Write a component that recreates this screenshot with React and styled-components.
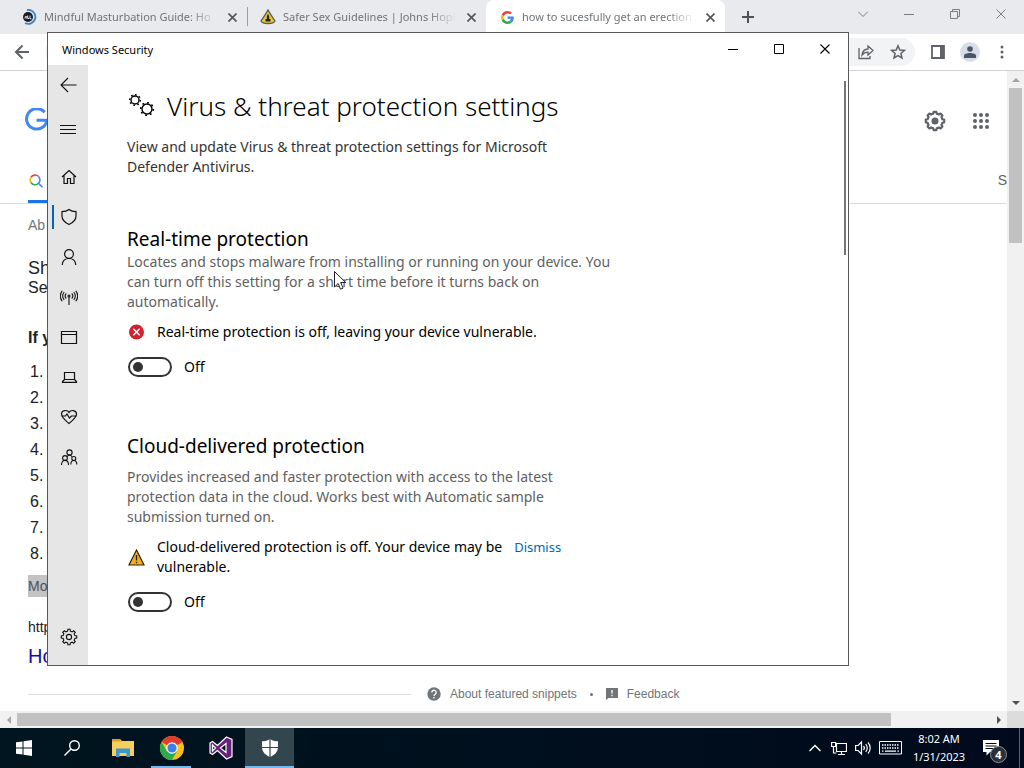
import { useState } from 'react'
import styled, { createGlobalStyle } from 'styled-components'

const GlobalStyle = createGlobalStyle`
  * { box-sizing: border-box; }
  body { margin: 0; background: #fff; overflow: hidden; }
  h1, h2, p, ol { margin: 0; padding: 0; font-weight: 400; }
  button { border: none; background: none; padding: 0; margin: 0; color: inherit; font: inherit; }
  a { text-decoration: none; }
  svg { display: block; flex: none; }
`

const segoe = `'Noto Sans', 'Open Sans', sans-serif`
const arial = `'Liberation Sans', Arial, sans-serif`

/* ---------- icons ---------- */

function gearPath(c, teeth, outer, inner) {
  const step = (Math.PI * 2) / teeth
  const at = (r, a) => `${(c + r * Math.cos(a)).toFixed(2)} ${(c + r * Math.sin(a)).toFixed(2)}`
  let d = ''
  for (let i = 0; i < teeth; i++) {
    const a = i * step - Math.PI / 2
    d += `${i ? 'L' : 'M'}${at(inner, a - step * 0.3)}L${at(outer, a - step * 0.18)}L${at(outer, a + step * 0.18)}L${at(inner, a + step * 0.3)}`
  }
  return d + 'Z'
}

const Cog = ({ x, y, r }) => (
  <>
    <circle cx={x} cy={y} r={r} strokeWidth="1.400" />
    <circle cx={x} cy={y} r={r + 1.3} strokeWidth="1.600" pathLength="24" strokeDasharray="1.200 1.800" />
  </>
)

const Line = ({ size = 18, children, width = 1.2 }) => (
  <svg width={size} height={size} viewBox={`0 0 ${size} ${size}`} fill="none" stroke="currentColor" strokeWidth={width}>
    {children}
  </svg>
)

const CloseIcon = ({ size = 10, width = 1.1 }) => (
  <svg width={size} height={size} viewBox="0 0 10 10" fill="none" stroke="currentColor" strokeWidth={width}>
    <path d="M.5.5l9 9M9.5.5l-9 9" />
  </svg>
)

const GoogleIcon = () => (
  <svg width="13" height="13" viewBox="0 0 48 48">
    <path fill="#ea4335" d="M24 9.5c3.54 0 6.71 1.22 9.21 3.6l6.85-6.85C35.9 2.38 30.47 0 24 0 14.62 0 6.51 5.38 2.56 13.22l7.98 6.19C12.43 13.72 17.74 9.5 24 9.5z" />
    <path fill="#4285f4" d="M46.98 24.55c0-1.57-.15-3.09-.38-4.55H24v9.02h12.94c-.58 2.96-2.26 5.48-4.78 7.18l7.73 6c4.51-4.18 7.09-10.36 7.09-17.65z" />
    <path fill="#fbbc05" d="M10.53 28.59A14.5 14.5 0 0 1 9.77 24c0-1.6.27-3.14.76-4.59l-7.98-6.19A23.99 23.99 0 0 0 0 24c0 3.88.92 7.54 2.56 10.78z" />
    <path fill="#34a853" d="M24 48c6.48 0 11.93-2.13 15.89-5.81l-7.73-6c-2.15 1.45-4.92 2.3-8.16 2.3-6.26 0-11.57-4.22-13.47-9.91l-7.98 6.19C6.51 42.62 14.62 48 24 48z" />
  </svg>
)

const MindIcon = () => (
  <svg width="16" height="16" viewBox="0 0 16 16" fill="none">
    <circle cx="7" cy="8" r="5" fill="#171b2b" />
    <path d="M6 1A7 7 0 1 1 4 14" stroke="#3d86c6" strokeWidth="1.800" />
    <path d="M3.500 9.300l1.700-2.300v2.800M6.700 6.500v3h1.500M9 6.500v3.300h1.500" stroke="#fff" strokeWidth=".9" />
  </svg>
)

const HopkinsIcon = () => (
  <svg width="16" height="16" viewBox="0 0 16 16">
    <path d="M8 1C9.5 4 12.5 8 15 12c-1 2-3 2.500-7 2.500S2 14 1 12C3.500 8 6.500 4 8 1z" fill="#f1c62c" stroke="#55605a" strokeWidth="1.300" />
    <path d="M8 4.500l1.200 3V10h1.300v2.500h-5V10h1.300V7.500z" fill="#222" />
  </svg>
)

const navIcons = {
  Home: (
    <Line>
      <path d="M2 9l7-6.500L16 9M4 7.500v8h3.500v-5h3v5H14v-8" />
    </Line>
  ),
  'Virus & threat protection': (
    <Line>
      <path d="M9 1.500C11 3 13.500 3.600 16 3.700V8c0 4-3 6.700-7 8.500C5 14.700 2 12 2 8V3.700C4.500 3.600 7 3 9 1.500z" />
    </Line>
  ),
  'Account protection': (
    <Line>
      <circle cx="9" cy="6" r="4.400" />
      <path d="M2.200 17c.3-4 3-6.500 6.800-6.500s6.500 2.500 6.800 6.500" />
    </Line>
  ),
  'Firewall & network protection': (
    <Line width={1.1}>
      <circle cx="9" cy="8" r="1" />
      <path d="M9 9v8M6.300 5.500a3.600 3.600 0 0 0 0 5M11.700 5.500a3.600 3.600 0 0 1 0 5M4.200 4a6.500 6.500 0 0 0 0 8M13.800 4a6.500 6.500 0 0 1 0 8M2.200 2.700a9 9 0 0 0 0 10.600M15.800 2.700a9 9 0 0 1 0 10.600" />
    </Line>
  ),
  'App & browser control': (
    <Line>
      <path d="M1.500 3.500h15v12h-15zM1.500 6.500h15" />
    </Line>
  ),
  'Device security': (
    <Line>
      <path d="M4.500 4.500h10v7h-10zM4.500 11.500l-2 2v.800h14v-.800l-2-2" />
    </Line>
  ),
  'Device performance & health': (
    <Line>
      <path d="M9 4.500C7.500 1.500 1.500 1.800 1.500 6c0 3.500 4 6.500 7.500 9.500 3.500-3 7.500-6 7.500-9.500 0-4.200-6-4.500-7.500-1.500z" />
      <path d="M1.500 8h4l1.500-2 2.500 4 2-2h5" />
    </Line>
  ),
  'Family options': (
    <Line width={1.1}>
      <circle cx="9.500" cy="4.500" r="2.600" />
      <circle cx="5" cy="10" r="2.400" />
      <circle cx="13.800" cy="10.500" r="2" />
      <path d="M1.500 17c0-3 1.500-4.600 3.500-4.600S8.500 14 8.500 17M10.800 16.500c0-2.500 1-4 3-4s3 1.500 3 4M7 8.700c.5-1 1.300-1.500 2.500-1.500s2 .5 2.500 1.500" />
    </Line>
  ),
}

/* ---------- browser ---------- */

const Desktop = styled.div`
  position: relative;
  height: 100vh;
  display: flex;
  flex-direction: column;
  overflow: hidden;
`
const TabStrip = styled.div`
  height: 34px;
  display: flex;
  padding-left: 8px;
  background: #e8eaed;
  font: 12px/18px ${segoe};
  color: #6f7377;
`
const Tab = styled.div`
  width: 239px;
  height: 34px;
  flex: none;
  display: flex;
  align-items: center;
  gap: 7px;
  padding: 0 10px 0 13px;
  border-radius: 8px 8px 0 0;
  background: ${(p) => (p.$active ? '#fff' : 'transparent')};
`
const TabIcon = styled.span`
  width: 16px;
  display: flex;
  justify-content: center;
`
const TabTitle = styled.span`
  flex: 1;
  font-size: 11px;
  overflow: hidden;
  white-space: nowrap;
  mask-image: linear-gradient(90deg, #000 84%, transparent);
`
const TabClose = styled.button`
  width: 10px;
  height: 16px;
  margin-left: 3px;
  display: grid;
  place-items: center;
  color: #55585c;
`
const TabDivider = styled.span`
  width: 1px;
  height: 19px;
  margin: 7px -1px 0 0;
  background: #9b9da1;
`
const NewTab = styled.button`
  width: 46px;
  height: 34px;
  display: grid;
  place-items: center;
  color: #4d5156;
`
const Controls = styled.div`
  margin-left: auto;
  display: flex;
  color: ${(p) => p.$color};
`
const ControlButton = styled.button`
  width: 46px;
  height: ${(p) => p.$height}px;
  display: grid;
  place-items: center;
`
const Toolbar = styled.div`
  height: 37px;
  flex: none;
  display: flex;
  align-items: center;
  gap: 7px;
  padding: 0 6px;
  border-bottom: 1px solid #d0d2d5;
  color: #5f6368;
`
const ToolButton = styled.button`
  width: 32px;
  height: 28px;
  display: grid;
  place-items: center;
`
const Address = styled.div`
  flex: 1;
  height: 28px;
  display: flex;
  justify-content: flex-end;
  padding-right: 1px;
  border-radius: 14px;
  background: #f1f3f4;
`
const ToolGroup = styled.div`
  display: flex;
`
const Avatar = styled.span`
  width: 20px;
  height: 20px;
  display: grid;
  place-items: center;
  border-radius: 50%;
  background: #d9dde8;
  color: #4c5566;
`
const Viewport = styled.div`
  flex: 1;
  min-height: 0;
  display: flex;
`
const Page = styled.main`
  flex: 1;
  min-width: 0;
  overflow: hidden;
  font-family: ${arial};
  color: #202124;
`
const SearchHeader = styled.header`
  height: 133px;
  padding-left: 24px;
  border-bottom: 1px solid #dadce0;
`
const HeaderTop = styled.div`
  height: 100px;
  display: flex;
  align-items: center;
  justify-content: space-between;
  padding-right: 14px;
`
const HeaderActions = styled.div`
  display: flex;
  gap: 22px;
  color: #5f6368;
`
const HeaderButton = styled.button`
  width: 24px;
  height: 24px;
  display: grid;
  place-items: center;
`
const HeaderTabs = styled.nav`
  display: flex;
  justify-content: space-between;
  padding-left: 4px;
  font-size: 14px;
  line-height: 18px;
  color: #5f6368;
`
const AllTab = styled.a`
  width: 60px;
  height: 32px;
  padding-top: 2px;
  border-bottom: 3px solid #1a73e8;
`
const Results = styled.div`
  padding: 11px 0 0 28px;
`
const ResultText = styled.p`
  height: ${(p) => p.$height}px;
  font-size: ${(p) => p.$size}px;
  line-height: 20px;
  font-weight: ${(p) => (p.$bold ? 700 : 400)};
  color: ${(p) => p.$color};
`
const Steps = styled.ol`
  padding-left: 2px;
  font-size: 16px;
  line-height: 26px;
  list-style: none;
  margin-bottom: 8px;
`
const MoreItems = styled.a`
  display: block;
  width: 60px;
  margin-bottom: 20px;
  font-size: 14px;
  line-height: 22px;
  background: #c3c3c3;
  color: #4d5156;
`
const SnippetFooter = styled.footer`
  display: flex;
  align-items: center;
  margin-top: 17px;
  font-size: 12px;
  line-height: 20px;
  color: #70757a;
`
const Rule = styled.span`
  width: 383px;
  height: 1px;
  margin-right: 16px;
  background: #dadce0;
`
const FooterLink = styled.a`
  display: flex;
  align-items: center;
  gap: 9px;
  color: inherit;
`
const Dot = styled.span`
  width: 3px;
  height: 3px;
  margin: 0 13px;
  border-radius: 50%;
  background: #70757a;
`
const ScrollTrack = styled.div`
  display: flex;
  flex: none;
  flex-direction: ${(p) => (p.$across ? 'row' : 'column')};
  ${(p) => (p.$across ? 'height' : 'width')}: 17px;
  padding: ${(p) => (p.$across ? '2px 0' : '0 2px 0 2px')};
  background: #f1f1f1;
`
const ScrollArrow = styled.button`
  width: ${(p) => (p.$across ? 17 : 13)}px;
  height: ${(p) => (p.$across ? 13 : 17)}px;
  display: grid;
  place-items: center;
  color: ${(p) => (p.$dim ? '#a3a3a3' : '#505050')};
`
const ScrollBody = styled.div`
  flex: 1;
  display: flex;
  flex-direction: ${(p) => (p.$across ? 'row' : 'column')};
`
const ScrollThumb = styled.div`
  flex: 0 0 ${(p) => p.$part}%;
  background: #c1c1c1;
`
const ScrollCorner = styled.div`
  width: 17px;
  margin: -2px 0;
  background: #dcdcdc;
`

/* ---------- security window ---------- */

const Window = styled.section`
  position: absolute;
  inset: 32px 175px 102px 47px;
  display: flex;
  flex-direction: column;
  border: 1px solid #57585a;
  background: #fff;
  color: #000;
  font: 14px/20px ${segoe};
`
const TitleBar = styled.div`
  display: flex;
  height: 32px;
  flex: none;
  padding-left: 14px;
  font-size: 11px;
  line-height: 33px;
`
const WindowBody = styled.div`
  flex: 1;
  min-height: 0;
  display: flex;
`
const Sidebar = styled.nav`
  width: 40px;
  flex: none;
  display: flex;
  flex-direction: column;
  padding-bottom: 8px;
  background: #e6e6e6;
  color: #111;
`
const SideButton = styled.button`
  width: 100%;
  height: 40px;
  flex: none;
  display: grid;
  place-items: center;
  padding-left: 2px;
`
const MenuButton = styled(SideButton)`
  height: 48px;
  padding-left: 0;
`
const SideGroup = styled.div`
  flex: 1;
  margin-top: 4px;
`
const NavItem = styled(SideButton)`
  background: ${(p) => (p.$active ? 'linear-gradient(#0067b8, #0067b8) 4px 8px / 2px 24px no-repeat' : 'none')};
`
const Settings = styled.div`
  flex: 1;
  padding: 21px 0 0 39px;
  white-space: nowrap;
  overflow: hidden;
`
const SettingsScroll = styled.div`
  width: 2px;
  height: 174px;
  margin: 16px 2px 0 0;
  background: #767676;
`
const PageTitle = styled.h1`
  display: flex;
  align-items: center;
  gap: 12px;
  margin-bottom: 11px;
  font-size: 26px;
  line-height: 40px;
  font-weight: 300;
`
const Intro = styled.p`
  color: #333;
  margin-bottom: 49px;
`
const Section = styled.section`
  margin-bottom: 56px;
`
const SectionTitle = styled.h2`
  font-size: 19px;
  line-height: 26px;
  margin-bottom: ${(p) => p.$gap}px;
`
const Description = styled.p`
  color: #5f5f5f;
`
const Alert = styled.div`
  display: flex;
  align-items: center;
  gap: 12px;
  margin: 10px 0 15px;
`
const Dismiss = styled.button`
  align-self: flex-start;
  font-size: 13px;
  color: #0067b8;
`
const ToggleLabel = styled.label`
  display: flex;
  align-items: center;
  gap: 12px;
  height: 20px;
`
const Toggle = styled.input`
  appearance: none;
  width: 44px;
  height: 20px;
  margin: 0 0 0 1px;
  padding: 0 3px;
  display: flex;
  align-items: center;
  justify-content: ${(p) => (p.checked ? 'flex-end' : 'flex-start')};
  border: 2px solid #333;
  border-radius: 10px;
  &::before {
    content: '';
    width: 10px;
    height: 10px;
    border-radius: 50%;
    background: #333;
  }
`
const Cursor = styled.svg`
  position: absolute;
  left: 333px;
  top: 270px;
`

/* ---------- taskbar ---------- */

const Taskbar = styled.footer`
  height: 40px;
  flex: none;
  display: flex;
  background: linear-gradient(90deg, #00151f, #000a1c);
  color: #fff;
`
const TaskButton = styled.button`
  width: 48px;
  height: 40px;
  display: grid;
  place-items: center;
`
const Apps = styled.div`
  display: flex;
  margin-left: 2px;
`
const AppButton = styled(TaskButton)`
  width: 49px;
  background: ${(p) => (p.$active ? '#33454d' : 'transparent')};
  ${(p) => p.$open && `
    background-image: linear-gradient(#76b9ed, #76b9ed);
    background-position: bottom;
    background-repeat: no-repeat;
    background-size: ${p.$active ? 100 : 82}% 2px;
  `}
`
const Tray = styled.div`
  margin-left: auto;
  display: flex;
  align-items: center;
`
const TrayButton = styled.button`
  width: ${(p) => p.$width}px;
  height: 40px;
  display: grid;
  place-items: center;
`
const Clock = styled.div`
  width: 68px;
  text-align: center;
  font: 11px/18px ${segoe};
`
const ActionCenter = styled.button`
  position: relative;
  width: 46px;
  height: 40px;
  display: grid;
  place-items: center;
  padding-right: 10px;
`
const Badge = styled.span`
  position: absolute;
  left: 17px;
  top: 18px;
  width: 17px;
  height: 17px;
  border: 1px solid #8b8f96;
  border-radius: 50%;
  background: #2a2f38;
  font: 700 11px/15px ${segoe};
`
const ShowDesktop = styled.button`
  width: 5px;
  height: 40px;
  border-left: 1px solid #5b6270;
`

const tabs = [
  { title: 'Mindful Masturbation Guide: Ho', icon: <MindIcon /> },
  { title: 'Safer Sex Guidelines | Johns Hopl', icon: <HopkinsIcon /> },
  { title: 'how to sucesfully get an erection', icon: <GoogleIcon />, active: true },
]

const triangles = { up: 'M4 2l4 4H0z', down: 'M0 2h8L4 6z', left: 'M2 4l4-4v8z', right: 'M6 4L2 0v8z' }
const Arrow = ({ dir, ...rest }) => (
  <ScrollArrow aria-label={`Scroll ${dir}`} {...rest}>
    <svg width="8" height="8" viewBox="0 0 8 8" fill="currentColor">
      <path d={triangles[dir]} />
    </svg>
  </ScrollArrow>
)

function BrowserTop() {
  return (
    <>
      <TabStrip>
        {tabs.map((t, i) => [
          <Tab key={t.title} $active={t.active}>
            <TabIcon>{t.icon}</TabIcon>
            <TabTitle>{t.title}</TabTitle>
            <TabClose aria-label="Close tab"><CloseIcon size={9} width={1.9} /></TabClose>
          </Tab>,
          i === 0 && <TabDivider key="divider" />,
        ])}
        <NewTab aria-label="New tab">
          <Line size={12} width={2}><path d="M6 0v12M0 6h12" /></Line>
        </NewTab>
        <Controls $color="#7b7d80">
          <ControlButton $height={28} aria-label="Search tabs"><Line size={10} width={1}><path d="M0 2.500l5 5 5-5" /></Line></ControlButton>
          <ControlButton $height={28} aria-label="Minimize"><Line size={10} width={1}><path d="M0 5.500h10" /></Line></ControlButton>
          <ControlButton $height={28} aria-label="Restore"><Line size={10} width={1}><path d="M.5 2.500h7v7h-7zM2.500 2.500v-2h7v7h-2" /></Line></ControlButton>
          <ControlButton $height={28} aria-label="Close"><CloseIcon width={1} /></ControlButton>
        </Controls>
      </TabStrip>
      <Toolbar>
        <ToolButton aria-label="Back">
          <Line size={16} width={2}><path d="M15 8H2M8.500 1.500L2 8l6.500 6.500" /></Line>
        </ToolButton>
        <Address>
          <ToolButton aria-label="Share">
            <Line size={16} width={1.3}>
              <path d="M1 4v10.500h11V12M4 11c.5-4 3-5.800 6-6V2l5 4.500-5 4.500V8.200C7.500 8.200 5.500 9 4 11z" />
            </Line>
          </ToolButton>
          <ToolButton aria-label="Bookmark">
            <Line size={16} width={1.5}>
              <path d="M8 1.800l1.800 4.200 4.600.4-3.500 3 1.100 4.500L8 11.500l-4 2.400 1.100-4.500-3.500-3 4.600-.4z" />
            </Line>
          </ToolButton>
        </Address>
        <ToolGroup>
          <ToolButton aria-label="Side panel">
            <svg width="14" height="14" viewBox="0 0 14 14">
              <path d="M1 1h12v12H1z" fill="none" stroke="currentColor" strokeWidth="1.800" />
              <path d="M9 1h4v12H9z" fill="currentColor" />
            </svg>
          </ToolButton>
          <ToolButton aria-label="Profile">
            <Avatar>
              <svg width="12" height="12" viewBox="0 0 12 12" fill="currentColor">
                <circle cx="6" cy="3" r="2.800" />
                <path d="M0 12V9.800C0 8 3 7 6 7s6 1 6 2.800V12z" />
              </svg>
            </Avatar>
          </ToolButton>
          <ToolButton aria-label="Menu">
            <svg width="4" height="14" viewBox="0 0 4 14" fill="currentColor">
              <circle cx="2" cy="2" r="1.500" /><circle cx="2" cy="7" r="1.500" /><circle cx="2" cy="12" r="1.500" />
            </svg>
          </ToolButton>
        </ToolGroup>
      </Toolbar>
    </>
  )
}

function SearchPage() {
  return (
    <Page>
      <SearchHeader>
        <HeaderTop>
          <svg width="26" height="26" viewBox="0 0 26 26" fill="none" stroke="#4285f4" strokeWidth="3">
            <path d="M20.600 4.300A10.200 10.200 0 1 0 22.900 12.200H12.500" />
          </svg>
          <HeaderActions>
            <HeaderButton aria-label="Settings">
              <svg width="22" height="22" viewBox="0 0 22 22" fill="none" stroke="currentColor" strokeWidth="2.200" strokeLinejoin="round">
                <path d={gearPath(11, 8, 9.3, 7.6)} />
                <circle cx="11" cy="11" r="3.500" fill="currentColor" stroke="none" />
              </svg>
            </HeaderButton>
            <HeaderButton aria-label="Google apps">
              <svg width="16" height="16" viewBox="0 0 16 16" fill="currentColor">
                {[2, 8, 14].map((y) => [2, 8, 14].map((x) => <circle key={`${x}-${y}`} cx={x} cy={y} r="2" />))}
              </svg>
            </HeaderButton>
          </HeaderActions>
        </HeaderTop>
        <HeaderTabs>
          <AllTab href="#all" aria-label="All">
            <svg width="16" height="16" viewBox="0 0 16 16" fill="none" strokeWidth="1.600">
              <path d="M2.900 9.500a4.800 4.800 0 0 1 .1-5.200" stroke="#fbbc04" />
              <path d="M3 4.300a4.800 4.800 0 0 1 7.500-.8" stroke="#ea4335" />
              <path d="M10.500 3.500a4.800 4.800 0 0 1 0 6.800l4 4" stroke="#4285f4" />
              <path d="M2.900 9.500a4.800 4.800 0 0 0 7.600.8" stroke="#34a853" />
            </svg>
          </AllTab>
          <span>S</span>
        </HeaderTabs>
      </SearchHeader>
      <Results>
        <ResultText $size={14} $height={43} $color="#70757a">Ab</ResultText>
        <ResultText $size={18} $height={20} $color="#202124">Sh</ResultText>
        <ResultText $size={16} $height={50} $color="#202124">Se</ResultText>
        <ResultText $size={16} $height={31} $bold $color="#202124">If y</ResultText>
        <Steps>
          {[1, 2, 3, 4, 5, 6, 7, 8].map((n) => <li key={n}>{n}.</li>)}
        </Steps>
        <MoreItems href="#more">Mo</MoreItems>
        <ResultText $size={14} $height={29} $color="#202124">http</ResultText>
        <ResultText as="a" href="#result" $size={20} $height={20} $color="#1a0dab">Ho</ResultText>
        <SnippetFooter>
          <Rule />
          <FooterLink href="#about">
            <svg width="14" height="14" viewBox="0 0 14 14">
              <circle cx="7" cy="7" r="6.700" fill="#70757a" />
              <path d="M4.800 5.500a2.200 2.200 0 1 1 3.400 1.800c-.8.500-1.200.9-1.200 1.700M7 10v1.500" fill="none" stroke="#fff" strokeWidth="1.300" />
            </svg>
            About featured snippets
          </FooterLink>
          <Dot />
          <FooterLink href="#feedback">
            <svg width="12" height="12" viewBox="0 0 12 12">
              <path d="M0 0h12v10H2.500L0 12z" fill="#70757a" />
              <path d="M6 2v3.500M6 6.800v1.400" stroke="#fff" strokeWidth="1.300" />
            </svg>
            Feedback
          </FooterLink>
        </SnippetFooter>
      </Results>
    </Page>
  )
}

function OffToggle({ name }) {
  const [on, setOn] = useState(false)
  return (
    <ToggleLabel>
      <Toggle type="checkbox" role="switch" aria-label={name} checked={on} onChange={() => setOn(!on)} />
      {on ? 'On' : 'Off'}
    </ToggleLabel>
  )
}

function SecurityWindow() {
  return (
    <Window>
      <TitleBar>
        Windows Security
        <Controls $color="#000">
          <ControlButton $height={32} aria-label="Minimize"><Line size={10} width={1}><path d="M0 5.500h10" /></Line></ControlButton>
          <ControlButton $height={32} aria-label="Maximize"><Line size={10} width={1}><path d="M.5.5h9v9h-9z" /></Line></ControlButton>
          <ControlButton $height={32} aria-label="Close"><CloseIcon /></ControlButton>
        </Controls>
      </TitleBar>
      <WindowBody>
        <Sidebar>
          <SideButton aria-label="Back">
            <Line size={18} width={1.1}><path d="M16.500 9H1M8 2L1 9l7 7" /></Line>
          </SideButton>
          <MenuButton aria-label="Open navigation">
            <Line size={16} width={1}><path d="M0 4.500h16M0 8.500h16M0 12.500h16" /></Line>
          </MenuButton>
          <SideGroup>
            {Object.keys(navIcons).map((name, i) => (
              <NavItem key={name} $active={i === 1} aria-label={name}>{navIcons[name]}</NavItem>
            ))}
          </SideGroup>
          <SideButton aria-label="Settings">
            <Line width={1.1}><path d={gearPath(9, 8, 7.8, 6)} /><circle cx="9" cy="9" r="2.600" /></Line>
          </SideButton>
        </Sidebar>
        <Settings>
          <PageTitle>
            <svg width="28" height="28" viewBox="0 0 28 28" fill="none" stroke="#000">
              <Cog x={8} y={8} r={4} />
              <Cog x={20} y={17} r={5} />
            </svg>
            Virus &amp; threat protection settings
          </PageTitle>
          <Intro>
            View and update Virus &amp; threat protection settings for Microsoft<br />
            Defender Antivirus.
          </Intro>
          <Section>
            <SectionTitle $gap={0}>Real-time protection</SectionTitle>
            <Description>
              Locates and stops malware from installing or running on your device. You<br />
              can turn off this setting for a short time before it turns back on<br />
              automatically.
            </Description>
            <Alert>
              <svg width="18" height="18" viewBox="0 0 18 18">
                <circle cx="9.500" cy="9" r="7.500" fill="#d3202f" />
                <path d="M6.300 5.800l6.400 6.400M12.700 5.800l-6.400 6.400" stroke="#fff" strokeWidth="1.500" />
              </svg>
              Real-time protection is off, leaving your device vulnerable.
            </Alert>
            <OffToggle name="Real-time protection" />
          </Section>
          <Section>
            <SectionTitle $gap={8}>Cloud-delivered protection</SectionTitle>
            <Description>
              Provides increased and faster protection with access to the latest<br />
              protection data in the cloud. Works best with Automatic sample<br />
              submission turned on.
            </Description>
            <Alert>
              <svg width="18" height="18" viewBox="0 0 18 18">
                <path d="M9.500 2L17 17H2z" fill="#f5b01e" stroke="#2b2413" strokeWidth="1.200" />
                <path d="M9.500 7v5.500M9.500 13.800v1.500" stroke="#2b2413" strokeWidth="1.400" />
              </svg>
              <span>Cloud-delivered protection is off. Your device may be<br />vulnerable.</span>
              <Dismiss>Dismiss</Dismiss>
            </Alert>
            <OffToggle name="Cloud-delivered protection" />
          </Section>
        </Settings>
        <SettingsScroll />
      </WindowBody>
    </Window>
  )
}

function TaskbarRow() {
  return (
    <Taskbar>
      <TaskButton aria-label="Start">
        <svg width="16" height="16" viewBox="0 0 16 16" fill="#fff">
          <path d="M0 2.300l6.500-.9v6.100H0zM7.500 1.200L16 0v7.500H7.500zM0 8.500h6.500v6.100L0 13.700zM7.500 8.500H16V16l-8.500-1.200z" />
        </svg>
      </TaskButton>
      <TaskButton aria-label="Search">
        <Line size={16} width={1.4}><circle cx="10.500" cy="5.500" r="4.800" /><path d="M7 9L.5 15.500" /></Line>
      </TaskButton>
      <Apps>
        <AppButton aria-label="File Explorer">
          <svg width="22" height="20" viewBox="0 0 22 20">
            <path d="M0 1h8l2 2h12v15H0z" fill="#f7cf5c" />
            <path d="M0 1h8l1.500 2.500H0z" fill="#e39b24" />
            <path d="M4 10.500h14V19h-3.500v-4h-7v4H4z" fill="#3f97c9" />
          </svg>
        </AppButton>
        <AppButton $open aria-label="Google Chrome">
          <svg width="24" height="24" viewBox="0 0 24 24">
            <circle cx="12" cy="12" r="12" fill="#fbc116" />
            <path d="M12 12L1.600 6A12 12 0 0 1 22.400 6z" fill="#e33b2e" />
            <path d="M1.600 6A12 12 0 0 0 12 24l5.200-9L12 12 6.800 15z" fill="#2da94f" />
            <circle cx="12" cy="12" r="5.800" fill="#fff" />
            <circle cx="12" cy="12" r="4.600" fill="#3f7fec" />
          </svg>
        </AppButton>
        <AppButton aria-label="Visual Studio">
          <svg width="24" height="24" viewBox="0 0 24 24">
            <path d="M17.500 1L23 3.500v17L17.500 23l-9-8.500-5 4L1 17V7l2.500-1.500 5 4zM17 7.500L11.500 12l5.500 4.500zM3.500 9v6l3-3z" fill="#68217a" stroke="#fff" strokeWidth="1.200" fillRule="evenodd" />
          </svg>
        </AppButton>
        <AppButton $open $active aria-label="Windows Security">
          <svg width="16" height="18" viewBox="0 0 16 18">
            <path d="M8 0c2 1.500 5 2.300 8 2.300V8c0 5-3.500 8-8 10-4.500-2-8-5-8-10V2.300C3 2.300 6 1.500 8 0z" fill="#fff" />
            <path d="M8 0v18M0 8.500h16" stroke="#33454d" strokeWidth="1.200" />
          </svg>
        </AppButton>
      </Apps>
      <Tray>
        <TrayButton $width={24} aria-label="Show hidden icons">
          <Line size={12} width={1.4}><path d="M.5 9L6 3.500 11.500 9" /></Line>
        </TrayButton>
        <TrayButton $width={24} aria-label="Network">
          <Line size={16} width={1.2}><path d="M5.500 3.500h10v8h-10zM.600 2.500h4v4h-4zM2.500 6.500v6.500h3M10.500 11.500v3M7 14.500h7" /></Line>
        </TrayButton>
        <TrayButton $width={24} aria-label="Volume">
          <Line size={16} width={1.2}><path d="M.6 5.500h2.500L6.500 2v12L3.100 10.500H.6zM8.500 6a3 3 0 0 1 0 4M10.700 4.200a5.500 5.500 0 0 1 0 7.600M13 2.500a8 8 0 0 1 0 11" /></Line>
        </TrayButton>
        <TrayButton $width={30} aria-label="Touch keyboard">
          <svg width="23" height="14" viewBox="0 0 23 14" fill="none" stroke="#fff">
            <path d="M.5.5h22v12.500H.5z" />
            <path d="M3 4h17M3 7h17" strokeDasharray="1.500 1" strokeWidth="1.500" />
            <path d="M3 10.200h1.500M6 10.200h11M18.500 10.200H20" strokeWidth="1.200" />
          </svg>
        </TrayButton>
        <Clock>8:02 AM<br />1/31/2023</Clock>
        <ActionCenter aria-label="Notifications">
          <svg width="16" height="16" viewBox="0 0 16 16">
            <path d="M0 0h16v12H7l-3.500 3.500V12H0z" fill="#fff" />
            <path d="M2.500 3.500h11M2.500 6h11M2.500 8.500h8" stroke="#000a1c" strokeWidth="1.200" />
          </svg>
          <Badge>4</Badge>
        </ActionCenter>
        <ShowDesktop aria-label="Show desktop" />
      </Tray>
    </Taskbar>
  )
}

export default function App() {
  return (
    <Desktop>
      <GlobalStyle />
      <BrowserTop />
      <Viewport>
        <SearchPage />
        <ScrollTrack>
          <Arrow dir="up" $dim />
          <ScrollBody><ScrollThumb $part={25.5} /></ScrollBody>
          <Arrow dir="down" />
        </ScrollTrack>
      </Viewport>
      <ScrollTrack $across>
        <Arrow dir="left" $across $dim />
        <ScrollBody $across><ScrollThumb $part={89.8} /></ScrollBody>
        <Arrow dir="right" $across />
        <ScrollCorner />
      </ScrollTrack>
      <TaskbarRow />
      <SecurityWindow />
      <Cursor width="14" height="22" viewBox="0 0 14 22">
        <path d="M1.500 1.500v15.500l3.600-3.500 2.400 5.700 2.600-1.100-2.400-5.600h5z" fill="#fff" stroke="#222" />
      </Cursor>
    </Desktop>
  )
}
